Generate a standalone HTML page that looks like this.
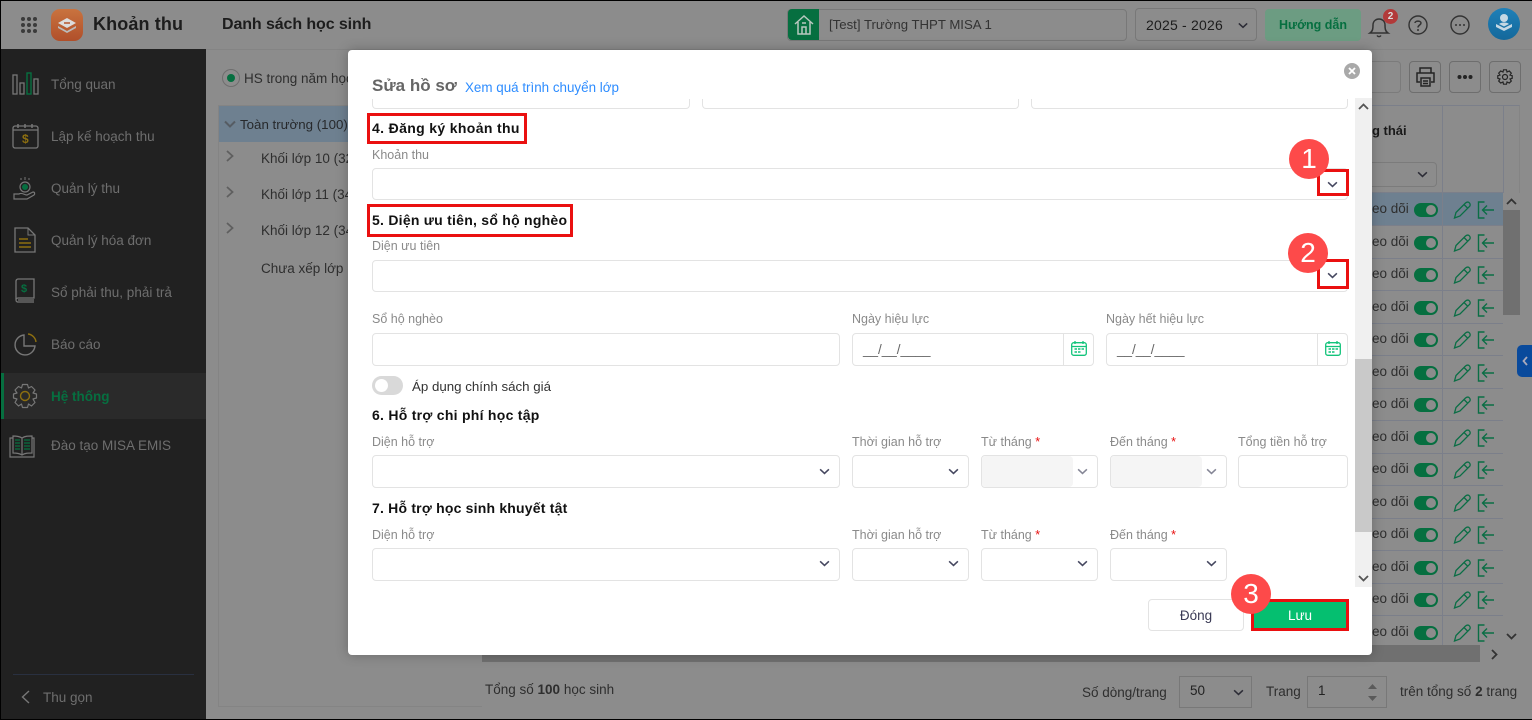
<!DOCTYPE html>
<html lang="vi"><head><meta charset="utf-8"><title>Khoản thu</title>
<style>
html,body{margin:0;padding:0;width:1532px;height:720px;overflow:hidden;background:#000}
*{box-sizing:border-box}
#p{position:absolute;left:1px;top:1px;width:1531px;height:718px;background:#8c8c8c;overflow:hidden}
#a{position:absolute;left:-1px;top:-1px;width:1532px;height:720px;font-family:"Liberation Sans",sans-serif;font-size:13px;color:#222}
.t{position:absolute;line-height:20px;white-space:nowrap}
.b{position:absolute}
svg{position:absolute;overflow:visible;fill:none}
.nav{color:#6e6e6e;font-size:13.5px;left:51px}
.row{position:absolute;left:1372px;width:131px;height:33px;border-bottom:1px solid #7b7f8a}
.row .tx{position:absolute;left:0;top:6px;line-height:20px;color:#2e2e2e;font-size:13.5px}
.row .tg{position:absolute;left:42px;top:10px;width:24px;height:14px;border-radius:7px;background:#066f40}
.row .tg:after{content:"";position:absolute;right:2px;top:2px;width:10px;height:10px;border-radius:5px;background:#8c8c8c}
.row .ln{position:absolute;left:70px;top:0;bottom:0;width:1px;background:#7b7f8a}
.l{color:#8a8a8a;font-size:12.5px}
.h{color:#111;font-weight:bold;font-size:14px;left:372px}
.i{position:absolute;background:#fff;border:1px solid #e3e3e3;border-radius:4px}
.rd{position:absolute;border:3px solid #ea1010}
.bd{position:absolute;width:40px;height:40px;border-radius:20px;background:#fd4a4a;color:#fff;font-size:28px;line-height:40px;text-align:center}
.star{color:#e81010}
</style></head><body>
<svg width="0" height="0" style="position:absolute">
<defs>
<symbol id="ch" viewBox="0 0 12 8"><path d="M1 1.5L6 6.2L11 1.5" stroke="#45475f" stroke-width="1.8" fill="none"/></symbol>
<symbol id="chd" viewBox="0 0 12 8"><path d="M1 1.5L6 6.2L11 1.5" stroke="#2c2c36" stroke-width="1.8" fill="none"/></symbol>
<symbol id="ac" viewBox="0 0 42 18"><path d="M1.500 17L3 11.500L12.500 2C14 .8 15.500 .8 16.500 2S17.400 4.300 16.500 5.500L7 15Z M11 3.500L15 7.500" stroke="#0a6e45" stroke-width="1.300" fill="none"/><path d="M31.500 1H25.500V17H31.500 M41 9H29.500 M34 4.500L29.500 9L34 13.500" stroke="#0a6e45" stroke-width="1.400" fill="none"/></symbol>
<symbol id="cal" viewBox="0 0 16 15"><rect x=".7" y="1.700" width="14.600" height="12.600" rx="2" stroke="#12c47b" stroke-width="1.300" fill="none"/><path d="M.7 5.500H15.300M4 0V3M12 0V3" stroke="#12c47b" stroke-width="1.300"/><path d="M3.500 8H6M7 8H9.500M10.500 8H13M3.500 11H6M7 11H9.500" stroke="#12c47b" stroke-width="1.500"/></symbol>
</defs></svg>
<div id="p"><div id="a">

<!-- header -->
<div class="b" style="left:0;top:49px;width:1532px;height:1px;background:#848484"></div>
<svg style="left:20px;top:16px" width="18" height="18"><g fill="#3b3b3b"><circle cx="3" cy="3" r="2"/><circle cx="9" cy="3" r="2"/><circle cx="15" cy="3" r="2"/><circle cx="3" cy="9" r="2"/><circle cx="9" cy="9" r="2"/><circle cx="15" cy="9" r="2"/><circle cx="3" cy="15" r="2"/><circle cx="9" cy="15" r="2"/><circle cx="15" cy="15" r="2"/></g></svg>
<div class="b" style="left:51px;top:9px;width:32px;height:32px;border-radius:9px;background:linear-gradient(#c9733f,#b04f2a)"></div>
<svg style="left:57px;top:17px" width="20" height="17"><path d="M10 1L19 6L10 11L1 6Z" fill="#ddd"/><path d="M1 9L10 14L19 9L19 11L10 16L1 11Z" fill="#bbb"/><path d="M7 6H13" stroke="#b5552d" stroke-width="1.500"/></svg>
<div class="t" style="left:93px;top:14px;font-size:18px;font-weight:bold;color:#1d1d1d;letter-spacing:.12px">Khoản thu</div>
<div class="t" style="left:222px;top:15px;font-size:16px;font-weight:bold;color:#1d1d1d;letter-spacing:-.1px">Danh sách học sinh</div>

<div class="b" style="left:787px;top:9px;width:340px;height:32px;border:1px solid #787878;border-radius:4px"></div>
<div class="b" style="left:788px;top:9px;width:31px;height:31px;background:#066f40;border-radius:4px 0 0 4px"></div>
<svg style="left:794px;top:15px" width="20" height="20"><path d="M1 9L10 1L19 9M4 7V19H16V7M8 19V12H12V19M8 8H12" stroke="#b8c8bf" stroke-width="1.500"/></svg>
<div class="t" style="left:829px;top:15px;font-size:13.200px;color:#333">[Test] Trường THPT MISA 1</div>
<div class="b" style="left:1135px;top:8px;width:122px;height:33px;border:1px solid #787878;border-radius:4px"></div>
<div class="t" style="left:1146px;top:15px;font-size:14px;color:#1d1d1d;letter-spacing:.2px">2025 - 2026</div>
<svg style="left:1238px;top:22px" width="10" height="7"><use href="#chd" width="10" height="7"/></svg>
<div class="b" style="left:1265px;top:9px;width:96px;height:32px;background:#6c9c82;border-radius:4px"></div>
<div class="t" style="left:1265px;width:96px;text-align:center;top:15px;font-size:12.500px;font-weight:bold;color:#066f40">Hướng dẫn</div>
<svg style="left:1369px;top:16px" width="20" height="22"><path d="M1 17C4 15 4 12 4 9C4 5 7 3 10 3C13 3 16 5 16 9C16 12 16 15 19 17ZM8 19.500C9 21 11 21 12 19.500" stroke="#333" stroke-width="1.500"/></svg>
<div class="b" style="left:1383px;top:9px;width:15px;height:15px;border-radius:8px;background:#b23a3a;color:#ddd;font-size:10px;font-weight:bold;line-height:15px;text-align:center">2</div>
<svg style="left:1408px;top:15px" width="20" height="20"><circle cx="10" cy="10" r="9" stroke="#333" stroke-width="1.400"/><path d="M7 8C7 5.500 13 5.500 13 8C13 10 10 10 10 12.500" stroke="#333" stroke-width="1.500"/><circle cx="10" cy="15" r="1" fill="#333"/></svg>
<svg style="left:1450px;top:15px" width="20" height="20"><circle cx="10" cy="10" r="9" stroke="#333" stroke-width="1.400"/><g fill="#333"><circle cx="6" cy="10" r="1"/><circle cx="10" cy="10" r="1"/><circle cx="14" cy="10" r="1"/></g></svg>
<div class="b" style="left:1488px;top:8px;width:32px;height:32px;border-radius:16px;background:linear-gradient(#1f80b8,#14689b)"></div>
<svg style="left:1495px;top:13px" width="18" height="22"><circle cx="9" cy="5" r="4" fill="#c5d8e4"/><path d="M1 11L9 15L17 11V14L9 18L1 14Z" fill="#c5d8e4"/><path d="M4 11C6 9 12 9 14 11L9 13.500Z" fill="#c5d8e4"/></svg>

<!-- sidebar -->
<div class="b" style="left:0;top:49px;width:206px;height:671px;background:#212121"></div>
<div class="b" style="left:1px;top:373px;width:205px;height:46px;background:#2a2a2a"></div>
<div class="b" style="left:1px;top:373px;width:3px;height:46px;background:#066f40"></div>
<div class="b" style="left:13px;top:674px;width:181px;height:1px;background:#293040"></div>

<svg style="left:12px;top:72px" width="28" height="24"><g stroke="#777" stroke-width="1.300"><rect x="1" y="3" width="4" height="19"/><rect x="8" y="11" width="4" height="11"/><rect x="22" y="7" width="4" height="15"/></g><rect x="15" y="1" width="4" height="21" stroke="#066f40" stroke-width="1.400"/></svg>
<div class="t nav" style="top:75px">Tổng quan</div>
<svg style="left:12px;top:123px" width="27" height="27"><path d="M3 3H24C25 3 26 4 26 5V23C26 24 25 25 24 25H3C2 25 1 24 1 23V5C1 4 2 3 3 3ZM1 7H26" stroke="#777" stroke-width="1.300"/><path d="M6 1V5M13 1V5M20 1V5" stroke="#777" stroke-width="1.500"/><text x="10" y="20" font-size="12" font-weight="bold" fill="#8d6f10" font-family="Liberation Sans">$</text></svg>
<div class="t nav" style="top:127px">Lập kế hoạch thu</div>
<svg style="left:13px;top:175px" width="24" height="26"><circle cx="12" cy="12" r="5" stroke="#777" stroke-width="1.200"/><path d="M12 2V5M8 3V5M16 3V5" stroke="#777"/><path d="M1 19H6C9 17 11 20 14 20L20 17C22 17 22 19 21 20L14 24H6L1 24Z" stroke="#777" stroke-width="1.200"/><circle cx="12" cy="12" r="3" fill="#066f40"/></svg>
<div class="t nav" style="top:179px">Quản lý thu</div>
<svg style="left:14px;top:227px" width="22" height="26"><path d="M1 1H14L21 8V25H1Z" stroke="#777" stroke-width="1.300"/><path d="M14 1V8H21" stroke="#777"/><path d="M5 12H14M5 16H17M5 20H17" stroke="#8d6f10" stroke-width="1.500"/></svg>
<div class="t nav" style="top:231px">Quản lý hóa đơn</div>
<svg style="left:15px;top:278px" width="20" height="26"><path d="M3 1H19V20H3C1 20 1 22 1 22C1 24 3 24 3 24H19M1 22V3C1 2 2 1 3 1M3 22H19" stroke="#777" stroke-width="1.300"/><text x="6" y="14" font-size="11" font-weight="bold" fill="#066f40" font-family="Liberation Sans">$</text></svg>
<div class="t nav" style="top:283px">Sổ phải thu, phải trả</div>
<svg style="left:14px;top:333px" width="23" height="23"><path d="M10 2A10 10 0 1 0 21 13H10Z" stroke="#777" stroke-width="1.400"/><path d="M14 1A9 9 0 0 1 22 9" stroke="#8d6f10" stroke-width="1.400"/></svg>
<div class="t nav" style="top:335px">Báo cáo</div>
<svg style="left:12px;top:383px" width="26" height="26"><path d="M10.500 1.500H15.500L16.500 5L19.500 3.500L23 7L21 10L24.500 11V15L21 16L23 19.500L19.500 23L16.500 21L15.500 24.500H10.500L9.500 21L6.500 23L3 19.500L5 16L1.500 15V11L5 10L3 7L6.500 3.500L9.500 5Z" stroke="#777" stroke-width="1.200" stroke-linejoin="round"/><circle cx="13" cy="13" r="4.500" stroke="#8d6f10" stroke-width="1.400"/></svg>
<div class="t nav" style="top:387px;color:#066f40;font-weight:bold">Hệ thống</div>
<svg style="left:9px;top:434px" width="27" height="24"><path d="M13 4C10 2 7 2 4 2V19C7 19 10 19 13 21C16 19 19 19 23 19V2C19 2 16 2 13 4ZM13 4V21M4 4H1V23H25V4H23" stroke="#777" stroke-width="1.200"/><path d="M6 6H11M6 9H11M6 12H11M6 15H11M15 6H21M15 9H21M15 12H21M15 15H21" stroke="#066f40" stroke-width="1.300"/></svg>
<div class="t nav" style="top:436px">Đào tạo MISA EMIS</div>
<svg style="left:21px;top:690px" width="9" height="14"><path d="M8 1L1.500 7L8 13" stroke="#777" stroke-width="1.400"/></svg>
<div class="t nav" style="left:43px;top:688px">Thu gọn</div>

<!-- content behind -->
<div class="b" style="left:222px;top:69px;width:18px;height:18px;border:1px solid #6e6e6e;border-radius:9px"></div>
<div class="b" style="left:227px;top:74px;width:8px;height:8px;background:#066f40;border-radius:4px"></div>
<div class="t" style="left:244px;top:69px;font-size:13.500px;color:#2e2e2e;width:104px;overflow:hidden">HS trong năm học</div>
<div class="b" style="left:218px;top:105px;width:264px;height:602px;border:1px solid #848484;border-right:0"></div>
<div class="b" style="left:219px;top:106px;width:129px;height:36px;background:#6e8090"></div>
<svg style="left:224px;top:120px" width="12" height="8"><path d="M1 1.500L6 6.500L11 1.500" stroke="#565c63" stroke-width="2"/></svg>
<div class="t" style="left:240px;top:115px;font-size:13.300px;color:#27292c;width:108px;overflow:hidden">Toàn trường (100)</div>
<svg style="left:226px;top:150px" width="8" height="12"><path d="M1 1L6.500 6L1 11" stroke="#5f5f5f" stroke-width="1.800"/></svg>
<svg style="left:226px;top:186px" width="8" height="12"><path d="M1 1L6.500 6L1 11" stroke="#5f5f5f" stroke-width="1.800"/></svg>
<svg style="left:226px;top:222px" width="8" height="12"><path d="M1 1L6.500 6L1 11" stroke="#5f5f5f" stroke-width="1.800"/></svg>
<div class="t" style="left:261px;top:149px;font-size:13.500px;color:#2e2e2e;width:87px;overflow:hidden">Khối lớp 10  (32)</div>
<div class="t" style="left:261px;top:185px;font-size:13.500px;color:#2e2e2e;width:87px;overflow:hidden">Khối lớp 11  (34)</div>
<div class="t" style="left:261px;top:221px;font-size:13.500px;color:#2e2e2e;width:87px;overflow:hidden">Khối lớp 12  (34)</div>
<div class="t" style="left:261px;top:259px;font-size:13.500px;color:#2e2e2e;width:87px;overflow:hidden">Chưa xếp lớp (0)</div>
<div class="b" style="left:1372px;top:61px;width:29px;height:32px;border:1px solid #7b7b7b;border-left:0;border-radius:0 4px 4px 0"></div>
<div class="b" style="left:1409px;top:61px;width:32px;height:32px;border:1px solid #6e6e6e;border-radius:4px"></div>
<svg style="left:1416px;top:67px" width="19" height="20"><path d="M4 6V1H15V6M4 15H1V6H18V15H15M5 11H14V19H5ZM7 14H12M7 16.500H12" stroke="#242424" stroke-width="1.500"/></svg>
<div class="b" style="left:1449px;top:61px;width:32px;height:32px;border:1px solid #6e6e6e;border-radius:4px"></div>
<svg style="left:1457px;top:74px" width="16" height="6"><g fill="#242424"><circle cx="2.500" cy="3" r="2"/><circle cx="8" cy="3" r="2"/><circle cx="13.500" cy="3" r="2"/></g></svg>
<div class="b" style="left:1489px;top:61px;width:32px;height:32px;border:1px solid #6e6e6e;border-radius:4px"></div>
<svg style="left:1497px;top:69px" width="16" height="16"><path d="M6.500 .8H9.500L10 3L12.300 2L14.300 4.200L13 6L15.200 6.700V9.300L13 10L14.300 12L12.300 14L10 13L9.500 15.200H6.500L6 13L3.700 14L1.700 12L3 10L.8 9.300V6.700L3 6L1.700 4.200L3.700 2L6 3Z" stroke="#242424" stroke-width="1.200"/><circle cx="8" cy="8" r="2.500" stroke="#242424" stroke-width="1.200"/></svg>

<div class="b" style="left:1372px;top:105px;width:148px;height:557px;border-right:1px solid #848484;border-top:1px solid #7b7f8a"></div>
<div class="b" style="left:1442px;top:105px;width:1px;height:88px;background:#7b7f8a"></div>
<div class="b" style="left:1503px;top:105px;width:1px;height:88px;background:#7b7f8a"></div>
<div class="b" style="left:1372px;top:192px;width:131px;height:1px;background:#7b7f8a"></div>
<div class="t" style="left:1364px;top:121px;font-size:13px;font-weight:bold;color:#1a1a1a">ng thái</div>
<div class="b" style="left:1372px;top:162px;width:65px;height:25px;border:1px solid #7b7b7b;border-left:0;border-radius:0 4px 4px 0"></div>
<svg style="left:1417px;top:171px" width="11" height="7"><use href="#chd" width="11" height="7"/></svg>

<div class="b" style="left:1372px;top:193px;width:131px;height:33px;background:#6e8090"></div>
<div class="row" style="top:193px"><span class="tx">eo dõi</span><i class="tg"></i><i class="ln"></i><svg style="left:81px;top:8px" width="42" height="18"><use href="#ac" width="42" height="18"/></svg></div>
<div class="row" style="top:226px"><span class="tx">eo dõi</span><i class="tg"></i><i class="ln"></i><svg style="left:81px;top:8px" width="42" height="18"><use href="#ac" width="42" height="18"/></svg></div>
<div class="row" style="top:258px"><span class="tx">eo dõi</span><i class="tg"></i><i class="ln"></i><svg style="left:81px;top:8px" width="42" height="18"><use href="#ac" width="42" height="18"/></svg></div>
<div class="row" style="top:291px"><span class="tx">eo dõi</span><i class="tg"></i><i class="ln"></i><svg style="left:81px;top:8px" width="42" height="18"><use href="#ac" width="42" height="18"/></svg></div>
<div class="row" style="top:323px"><span class="tx">eo dõi</span><i class="tg"></i><i class="ln"></i><svg style="left:81px;top:8px" width="42" height="18"><use href="#ac" width="42" height="18"/></svg></div>
<div class="row" style="top:356px"><span class="tx">eo dõi</span><i class="tg"></i><i class="ln"></i><svg style="left:81px;top:8px" width="42" height="18"><use href="#ac" width="42" height="18"/></svg></div>
<div class="row" style="top:388px"><span class="tx">eo dõi</span><i class="tg"></i><i class="ln"></i><svg style="left:81px;top:8px" width="42" height="18"><use href="#ac" width="42" height="18"/></svg></div>
<div class="row" style="top:421px"><span class="tx">eo dõi</span><i class="tg"></i><i class="ln"></i><svg style="left:81px;top:8px" width="42" height="18"><use href="#ac" width="42" height="18"/></svg></div>
<div class="row" style="top:453px"><span class="tx">eo dõi</span><i class="tg"></i><i class="ln"></i><svg style="left:81px;top:8px" width="42" height="18"><use href="#ac" width="42" height="18"/></svg></div>
<div class="row" style="top:486px"><span class="tx">eo dõi</span><i class="tg"></i><i class="ln"></i><svg style="left:81px;top:8px" width="42" height="18"><use href="#ac" width="42" height="18"/></svg></div>
<div class="row" style="top:518px"><span class="tx">eo dõi</span><i class="tg"></i><i class="ln"></i><svg style="left:81px;top:8px" width="42" height="18"><use href="#ac" width="42" height="18"/></svg></div>
<div class="row" style="top:551px"><span class="tx">eo dõi</span><i class="tg"></i><i class="ln"></i><svg style="left:81px;top:8px" width="42" height="18"><use href="#ac" width="42" height="18"/></svg></div>
<div class="row" style="top:583px"><span class="tx">eo dõi</span><i class="tg"></i><i class="ln"></i><svg style="left:81px;top:8px" width="42" height="18"><use href="#ac" width="42" height="18"/></svg></div>
<div class="row" style="top:616px;height:29px;border-bottom:0"><span class="tx">eo dõi</span><i class="tg"></i><i class="ln"></i><svg style="left:81px;top:8px" width="42" height="18"><use href="#ac" width="42" height="18"/></svg></div>

<div class="b" style="left:1503px;top:193px;width:17px;height:452px;background:#8c8c8c"></div>
<div class="b" style="left:1503px;top:210px;width:17px;height:105px;background:#707070"></div>
<svg style="left:1506px;top:198px" width="11" height="7"><path d="M1 6L5.500 1.500L10 6" stroke="#333" stroke-width="1.800"/></svg>
<svg style="left:1506px;top:633px" width="11" height="7"><path d="M1 1L5.500 5.500L10 1" stroke="#333" stroke-width="1.800"/></svg>
<div class="b" style="left:482px;top:645px;width:998px;height:17px;background:#707070"></div>
<div class="b" style="left:1480px;top:645px;width:40px;height:17px;background:#8c8c8c"></div>
<svg style="left:1491px;top:649px" width="7" height="11"><path d="M1 1L5.500 5.500L1 10" stroke="#333" stroke-width="1.800"/></svg>
<div class="b" style="left:1517px;top:345px;width:15px;height:32px;background:#094a9c;border-radius:5px 0 0 5px"></div>
<svg style="left:1522px;top:356px" width="6" height="10"><path d="M5 1L1.500 5L5 9" stroke="#aab" stroke-width="1.800"/></svg>

<div class="t" style="left:485px;top:680px;font-size:13.500px;color:#2e2e2e">Tổng số <b>100</b> học sinh</div>
<div class="t" style="left:1082px;top:683px;font-size:13.500px;color:#2e2e2e">Số dòng/trang</div>
<div class="b" style="left:1179px;top:676px;width:73px;height:32px;border:1px solid #787878"></div>
<div class="t" style="left:1190px;top:681px;font-size:13.500px;color:#222">50</div>
<svg style="left:1233px;top:689px" width="11" height="7"><use href="#chd" width="11" height="7"/></svg>
<div class="t" style="left:1266px;top:682px;font-size:13.500px;color:#2e2e2e">Trang</div>
<div class="b" style="left:1307px;top:676px;width:80px;height:32px;border:1px solid #787878"></div>
<div class="t" style="left:1318px;top:681px;font-size:13.500px;color:#222">1</div>
<svg style="left:1367px;top:684px" width="11" height="17"><path d="M5.500 0L10 5H1ZM1 12H10L5.500 17Z" fill="#5a5a5a"/></svg>
<div class="t" style="left:1400px;top:682px;font-size:13.500px;color:#2e2e2e">trên tổng số <b>2</b> trang</div>

<!-- modal -->
<div class="b" style="left:348px;top:50px;width:1024px;height:605px;background:#fff;border-radius:4px;box-shadow:0 0 12px rgba(0,0,0,.25)"></div>
<div class="t" style="left:372px;top:76px;font-size:17px;font-weight:bold;color:#666">Sửa hồ sơ</div>
<div class="t" style="left:465px;top:78px;font-size:13.400px;color:#2d8cff">Xem quá trình chuyển lớp</div>
<div class="b" style="left:1344px;top:63px;width:16px;height:16px;border-radius:8px;background:#a9a9a9"></div>
<svg style="left:1348px;top:67px" width="8" height="8"><path d="M1 1L7 7M7 1L1 7" stroke="#fff" stroke-width="1.800"/></svg>

<div class="b" style="left:1355px;top:98px;width:17px;height:489px;background:#f0f0f0"></div>
<div class="b" style="left:1355px;top:359px;width:17px;height:173px;background:#c9c9c9"></div>
<svg style="left:1358px;top:103px" width="11" height="7"><path d="M1 6L5.500 1.500L10 6" stroke="#555" stroke-width="1.800"/></svg>
<svg style="left:1358px;top:575px" width="11" height="7"><path d="M1 1L5.500 5.500L10 1" stroke="#555" stroke-width="1.800"/></svg>

<div class="b" style="left:372px;top:99px;width:318px;height:10px;border:1px solid #e3e3e3;border-top:0;border-radius:0 0 4px 4px"></div>
<div class="b" style="left:702px;top:99px;width:317px;height:10px;border:1px solid #e3e3e3;border-top:0;border-radius:0 0 4px 4px"></div>
<div class="b" style="left:1031px;top:99px;width:317px;height:10px;border:1px solid #e3e3e3;border-top:0;border-radius:0 0 4px 4px"></div>

<div class="rd" style="left:367px;top:113px;width:160px;height:31px"></div>
<div class="t h" style="top:118px;letter-spacing:.35px">4. Đăng ký khoản thu</div>
<div class="t l" style="left:372px;top:145px">Khoản thu</div>
<div class="i" style="left:372px;top:168px;width:976px;height:32px"></div>

<div class="rd" style="left:367px;top:204px;width:206px;height:33px"></div>
<div class="t h" style="top:210px;letter-spacing:.25px">5. Diện ưu tiên, sổ hộ nghèo</div>
<div class="t l" style="left:372px;top:236px">Diện ưu tiên</div>
<div class="i" style="left:372px;top:260px;width:976px;height:32px"></div>

<svg style="left:1327px;top:181px" width="11" height="7"><use href="#ch" width="11" height="7"/></svg>
<svg style="left:1327px;top:272px" width="11" height="7"><use href="#ch" width="11" height="7"/></svg>
<div class="rd" style="left:1317px;top:169px;width:32px;height:27px"></div>
<div class="rd" style="left:1317px;top:259px;width:32px;height:30px"></div>
<div class="bd" style="left:1289px;top:139px">1</div>
<div class="bd" style="left:1288px;top:233px">2</div>

<div class="t l" style="left:372px;top:309px">Sổ hộ nghèo</div>
<div class="t l" style="left:852px;top:309px">Ngày hiệu lực</div>
<div class="t l" style="left:1106px;top:309px">Ngày hết hiệu lực</div>
<div class="i" style="left:372px;top:333px;width:468px;height:33px"></div>
<div class="i" style="left:852px;top:333px;width:242px;height:33px"></div>
<div class="b" style="left:1063px;top:334px;width:1px;height:31px;background:#e3e3e3"></div>
<div class="t" style="left:863px;top:340px;font-size:13.500px;color:#666">__/__/____</div>
<svg style="left:1071px;top:341px" width="16" height="15"><use href="#cal" width="16" height="15"/></svg>
<div class="i" style="left:1106px;top:333px;width:242px;height:33px"></div>
<div class="b" style="left:1317px;top:334px;width:1px;height:31px;background:#e3e3e3"></div>
<div class="t" style="left:1117px;top:340px;font-size:13.500px;color:#666">__/__/____</div>
<svg style="left:1325px;top:341px" width="16" height="15"><use href="#cal" width="16" height="15"/></svg>

<div class="b" style="left:372px;top:376px;width:31px;height:19px;border-radius:10px;background:#d9d9d9"></div>
<div class="b" style="left:375px;top:379px;width:13px;height:13px;border-radius:7px;background:#fff"></div>
<div class="t" style="left:412px;top:377px;font-size:13.300px;color:#333">Áp dụng chính sách giá</div>

<div class="t h" style="top:405px;letter-spacing:.27px">6. Hỗ trợ chi phí học tập</div>
<div class="t l" style="left:372px;top:432px">Diện hỗ trợ</div>
<div class="t l" style="left:852px;top:432px">Thời gian hỗ trợ</div>
<div class="t l" style="left:981px;top:432px">Từ tháng <span class="star">*</span></div>
<div class="t l" style="left:1110px;top:432px">Đến tháng <span class="star">*</span></div>
<div class="t l" style="left:1238px;top:432px">Tổng tiền hỗ trợ</div>
<div class="i" style="left:372px;top:455px;width:468px;height:33px"></div>
<svg style="left:819px;top:468px" width="11" height="7"><use href="#ch" width="11" height="7"/></svg>
<div class="i" style="left:852px;top:455px;width:117px;height:33px"></div>
<svg style="left:948px;top:468px" width="11" height="7"><use href="#ch" width="11" height="7"/></svg>
<div class="i" style="left:981px;top:455px;width:117px;height:33px"></div>
<div class="b" style="left:982px;top:456px;width:91px;height:31px;background:#f5f5f5;border-radius:4px"></div>
<svg style="left:1077px;top:468px" width="11" height="7" opacity=".65"><use href="#ch" width="11" height="7"/></svg>
<div class="i" style="left:1110px;top:455px;width:117px;height:33px"></div>
<div class="b" style="left:1111px;top:456px;width:91px;height:31px;background:#f5f5f5;border-radius:4px"></div>
<svg style="left:1206px;top:468px" width="11" height="7" opacity=".65"><use href="#ch" width="11" height="7"/></svg>
<div class="i" style="left:1238px;top:455px;width:110px;height:33px"></div>

<div class="t h" style="top:498px;letter-spacing:.2px">7. Hỗ trợ học sinh khuyết tật</div>
<div class="t l" style="left:372px;top:525px">Diện hỗ trợ</div>
<div class="t l" style="left:852px;top:525px">Thời gian hỗ trợ</div>
<div class="t l" style="left:981px;top:525px">Từ tháng <span class="star">*</span></div>
<div class="t l" style="left:1110px;top:525px">Đến tháng <span class="star">*</span></div>
<div class="i" style="left:372px;top:548px;width:468px;height:33px"></div>
<svg style="left:819px;top:560px" width="11" height="7"><use href="#ch" width="11" height="7"/></svg>
<div class="i" style="left:852px;top:548px;width:117px;height:33px"></div>
<svg style="left:948px;top:560px" width="11" height="7"><use href="#ch" width="11" height="7"/></svg>
<div class="i" style="left:981px;top:548px;width:117px;height:33px"></div>
<svg style="left:1077px;top:560px" width="11" height="7"><use href="#ch" width="11" height="7"/></svg>
<div class="i" style="left:1110px;top:548px;width:117px;height:33px"></div>
<svg style="left:1206px;top:560px" width="11" height="7"><use href="#ch" width="11" height="7"/></svg>

<div class="i" style="left:1148px;top:599px;width:96px;height:32px"></div>
<div class="t" style="left:1148px;width:96px;top:606px;text-align:center;font-size:13.500px;color:#3a3a55">Đóng</div>
<div class="b" style="left:1251px;top:599px;width:98px;height:32px;background:#05bf70;border:3px solid #ea1010"></div>
<div class="t" style="left:1251px;width:98px;top:606px;text-align:center;font-size:13.500px;color:#fff">Lưu</div>
<div class="bd" style="left:1231px;top:574px">3</div>

</div></div>
</body></html>
